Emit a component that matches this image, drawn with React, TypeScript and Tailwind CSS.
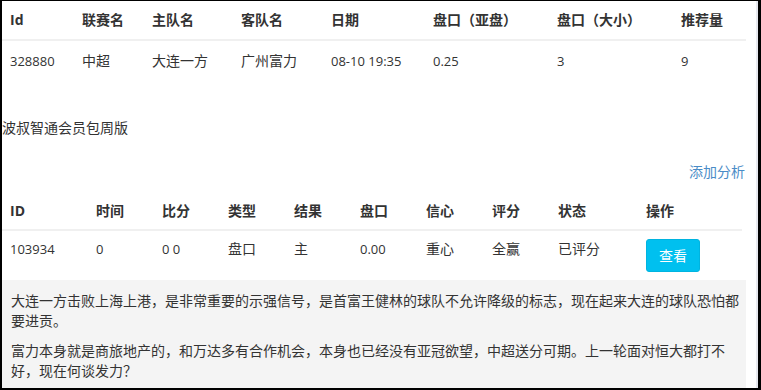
const font = { fontFamily: '"Open Sans", "Noto Sans CJK SC", sans-serif' };

const matchHead = ["Id", "联赛名", "主队名", "客队名", "日期", "盘口（亚盘）", "盘口（大小）", "推荐量"];
const matchRow = ["328880", "中超", "大连一方", "广州富力", "08-10 19:35", "0.25", "3", "9"];

const tipHead = ["ID", "时间", "比分", "类型", "结果", "盘口", "信心", "评分", "状态", "操作"];
const tipRow = ["103934", "0", "0 0", "盘口", "主", "0.00", "重心", "全赢", "已评分"];

const isNum = (s: string) => /^[0-9.: -]+$/.test(s);

export default function App() {
  return (
    <div
      className="w-[761px] h-[390px] overflow-hidden flex bg-white text-[#333] text-[14px] leading-[20px] border-l-2 border-t border-b-2 border-r-[3px] border-black"
      style={font}
    >
      <div className="w-[744px] flex flex-col shrink-0">
        {/* match table */}
        <div className="grid grid-cols-[72px_70px_89px_90px_102px_124px_124px_73px]">
          {matchHead.map((h) => (
            <div key={h} className="pl-2 pt-[9px] pb-[9px] font-bold border-b-2 border-[#f0f0f0]">
              {h}
            </div>
          ))}
          {matchRow.map((c, i) => (
            <div key={i} className={`pl-2 pt-[10px] pb-[10px] ${isNum(c) ? "text-[13px]" : ""}`}>
              {c}
            </div>
          ))}
        </div>

        <p className="mt-[37px]">波叔智通会员包周版</p>
        <div className="mt-[24px] text-right pr-[1px]">
          <a className="text-[#4a8cc7]">添加分析</a>
        </div>

        {/* tip table */}
        <div className="mt-[11px] grid grid-cols-[86px_66px_66px_66px_66px_66px_66px_66px_88px_104px]">
          {tipHead.map((h) => (
            <div key={h} className="pl-2 py-2 font-bold border-b-2 border-[#f0f0f0]">
              {h}
            </div>
          ))}
          {tipRow.map((c, i) => (
            <div key={i} className={`pl-2 py-2 ${isNum(c) ? "text-[13px]" : ""}`}>
              {c}
            </div>
          ))}
          <div className="pl-2 py-2">
            <button className="w-[54px] h-[33px] rounded-[3px] bg-[#00c0ef] border border-[#00b4e0] text-white">
              查看
            </button>
          </div>
        </div>

        <div className="flex-1 bg-[#f4f4f4] pl-[9px] pr-1 pt-[11px]">
          <p>大连一方击败上海上港，是非常重要的示强信号，是首富王健林的球队不允许降级的标志，现在起来大连的球队恐怕都要进贡。</p>
          <p className="mt-[10px]">富力本身就是商旅地产的，和万达多有合作机会，本身也已经没有亚冠欲望，中超送分可期。上一轮面对恒大都打不好，现在何谈发力？</p>
        </div>
      </div>
      <div className="w-[10px] shrink-0" />
      <div className="w-[2px] shrink-0 bg-[#e6e8ef]" />
    </div>
  );
}
